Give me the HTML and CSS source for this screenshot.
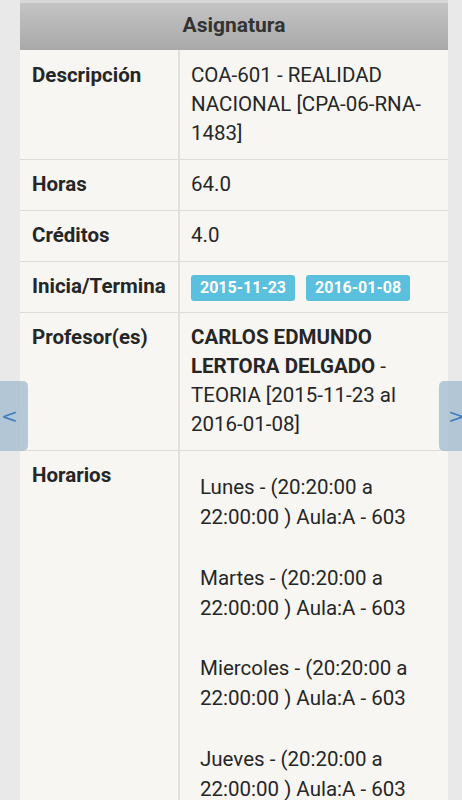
FILE: index.html
```html
<!DOCTYPE html>
<html lang="es">
<head>
<meta charset="utf-8">
<title>Asignatura</title>
<link rel="stylesheet" href="styles.css">
</head>
<body>
<div class="page">
  <div class="card">
    <div class="card-head">Asignatura</div>
    <table class="info">
      <tr>
        <th>Descripción</th>
        <td>COA-601 - REALIDAD NACIONAL [CPA-06-RNA-1483]</td>
      </tr>
      <tr>
        <th>Horas</th>
        <td>64.0</td>
      </tr>
      <tr>
        <th>Créditos</th>
        <td>4.0</td>
      </tr>
      <tr>
        <th>Inicia/Termina</th>
        <td><span class="badge">2015-11-23</span><span class="badge">2016-01-08</span></td>
      </tr>
      <tr>
        <th>Profesor(es)</th>
        <td><b>CARLOS EDMUNDO LERTORA DELGADO</b> - TEORIA [2015-11-23 al 2016-01-08]</td>
      </tr>
      <tr>
        <th>Horarios</th>
        <td>
          <div class="horarios">
            <p>Lunes - (20:20:00 a 22:00:00 ) Aula:A - 603</p>
            <p>Martes - (20:20:00 a 22:00:00 ) Aula:A - 603</p>
            <p>Miercoles - (20:20:00 a 22:00:00 ) Aula:A - 603</p>
            <p>Jueves - (20:20:00 a 22:00:00 ) Aula:A - 603</p>
          </div>
        </td>
      </tr>
    </table>
  </div>
  <button class="nav nav-prev">&lt;</button>
  <button class="nav nav-next">&gt;</button>
</div>
</body>
</html>
```

FILE: styles.css
```css
html, body {
  margin: 0;
  padding: 0;
  background: #e9e9e9;
  font-family: Roboto, "Liberation Sans", sans-serif;
  color: #262626;
}
.page {
  position: relative;
  height: 800px;
  overflow: hidden;
}
.card {
  margin: 0 14px 0 20px;
  width: 428px;
  background: #f7f6f3;
}
.card-head {
  height: 47px;
  border-top: 3px solid #d8d8d8;
  background: linear-gradient(#c4c4c4, #a9a9a9);
  text-align: center;
  font-weight: bold;
  font-size: 21px;
  line-height: 44px;
  color: #333;
}
.info {
  width: 100%;
  border-collapse: collapse;
  font-size: 20.5px;
  line-height: 29px;
}
.info th, .info td {
  border-top: 1px solid #dddcd9;
  vertical-align: top;
  text-align: left;
  padding: 10px 11px 11px;
}
.info tr:first-child th, .info tr:first-child td { border-top: none; padding-top: 11px; }
.info th {
  width: 135px;
  padding-left: 12px;
  border-right: 2px solid #e2e1de;
  font-weight: bold;
}
.info td { font-weight: normal; }
.badge {
  display: inline-block;
  background: #5bc0de;
  color: #fff;
  font-weight: bold;
  font-size: 16px;
  line-height: 26px;
  padding: 0 9px;
  border-radius: 3px;
  margin-right: 11px;
  vertical-align: middle;
}
.horarios {
  padding: 11px 0 0 9px;
  line-height: 30px;
}
.horarios p {
  margin: 0 0 30.5px;
}
.nav {
  position: absolute;
  top: 381px;
  height: 70px;
  width: 28px;
  border: none;
  background: rgba(160, 185, 205, 0.75);
  color: #3f7fc0;
  font-family: "DejaVu Sans", sans-serif;
  font-size: 20px;
  padding: 0;
}
.nav-prev { left: 0; border-radius: 0 5px 5px 0; text-align: left; padding-left: 1px; }
.nav-next { right: 0; width: 23px; border-radius: 5px 0 0 5px; text-align: left; padding-left: 9px; }
```
